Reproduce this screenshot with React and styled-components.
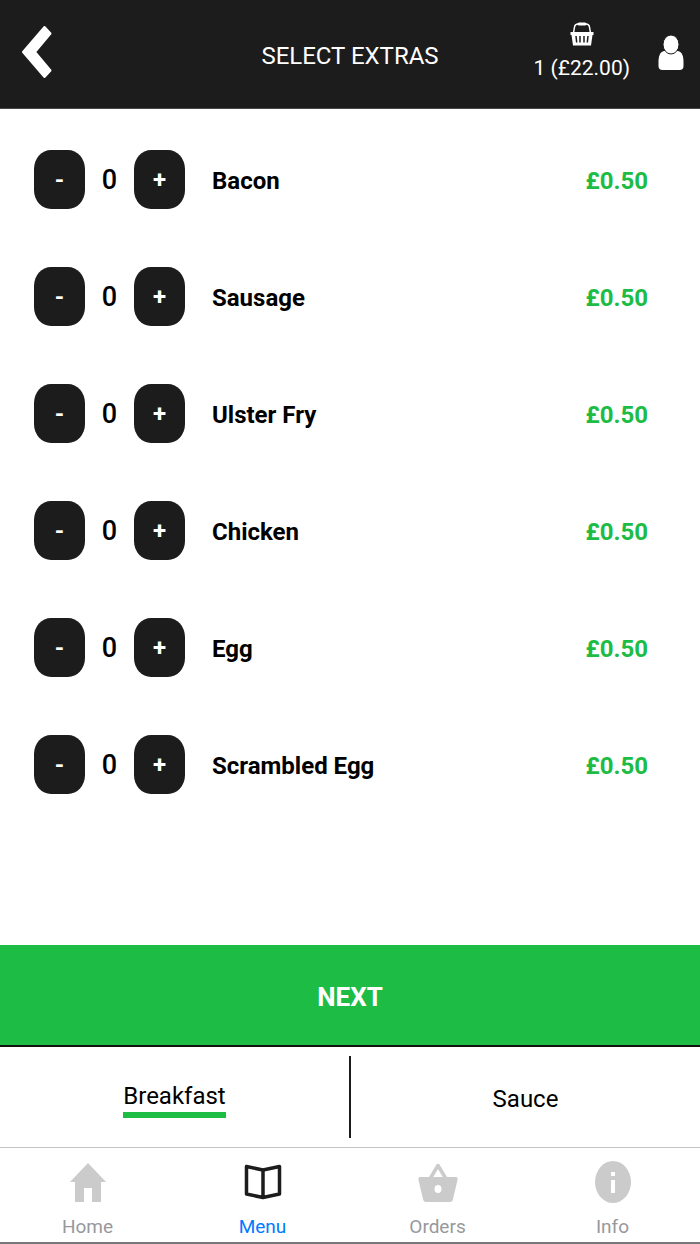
import { useState } from "react";
import styled, { createGlobalStyle } from "styled-components";

const GlobalStyle = createGlobalStyle`
  * {
    box-sizing: border-box;
  }

  body {
    margin: 0;
    background-color: #fff;
    color: #000;
    font-family: Roboto, "Liberation Sans", sans-serif;
  }

  button {
    border: none;
    padding: 0;
    background: none;
    font-family: inherit;
    cursor: pointer;
  }

  a {
    color: inherit;
    text-decoration: none;
  }

  svg {
    display: block;
  }
`;

const Page = styled.div`
  display: flex;
  flex-direction: column;
  min-height: 100vh;
`;

const Header = styled.header`
  display: grid;
  grid-template-columns: 1fr auto 1fr;
  align-items: center;
  height: 109px;
  padding: 0 16px 4px;
  border-bottom: 1px solid #4a4848;
  background-color: #1c1c1c;
  color: #fff;
`;

const BackButton = styled.button`
  justify-self: start;
  padding-left: 4px;
  color: #fff;
`;

const Title = styled.h1`
  margin: 0;
  padding-top: 8px;
  font-size: 24px;
  line-height: 32px;
  font-weight: 400;
`;

const HeaderActions = styled.div`
  display: flex;
  align-items: center;
  justify-content: flex-end;
  gap: 28px;
  padding-top: 2px;
`;

const BasketLink = styled.a`
  display: flex;
  flex-direction: column;
  align-items: center;
  gap: 6px;
  font-size: 21px;
  line-height: 32px;
`;

const ExtrasList = styled.ul`
  display: flex;
  flex-direction: column;
  flex: 1;
  gap: 58px;
  margin: 0;
  padding: 41px 52px 58px 34px;
  list-style: none;
`;

const ExtraRow = styled.li`
  display: flex;
  align-items: center;
`;

const StepButton = styled.button`
  width: 51px;
  height: 59px;
  border-radius: 17px / 19px;
  background-color: #1c1c1c;
  color: #fff;
  font-size: 24px;
  font-weight: 700;
`;

const Quantity = styled.output`
  width: 49px;
  font-size: 27px;
  font-weight: 500;
  text-align: center;
`;

const ExtraName = styled.span`
  flex: 1;
  padding: 2px 0 0 27px;
  font-size: 24px;
  line-height: 32px;
  font-weight: 700;
`;

const Price = styled.span`
  padding-top: 2px;
  color: #1cbc45;
  font-size: 24px;
  line-height: 32px;
  font-weight: 700;
`;

const NextButton = styled.button`
  height: 102px;
  padding-top: 4px;
  border-bottom: 2px solid #111;
  background-color: #1cbc45;
  color: #fff;
  font-size: 26px;
  font-weight: 700;
`;

const Tabs = styled.div`
  display: flex;
  height: 100px;
  padding: 9px 0;
`;

const Tab = styled.button`
  flex: 1;
  padding-top: 4px;
  color: #000;
  font-size: 24px;
  line-height: 32px;

  & + & {
    border-left: 2px solid #1c1c1c;
  }
`;

const TabLabel = styled.span`
  display: inline-block;
  border-bottom: ${(props) => (props.$active ? "6px solid #1cbc45" : "none")};
`;

const BottomNav = styled.nav`
  display: flex;
  height: 97px;
  border-top: 1px solid #c4c4c4;
  border-bottom: 2px solid #77777a;
`;

const NavItem = styled.a`
  display: flex;
  flex: 1;
  flex-direction: column;
  align-items: center;
  padding-top: 12px;
  gap: 11px;
  color: ${(props) => (props.$active ? "#007aff" : "#98989d")};
  font-size: 19px;
  line-height: 24px;
`;

const BackIcon = () => (
  <svg width="34" height="58" viewBox="0 0 34 58" aria-hidden="true">
    <path
      d="M24.5 4 30.5 10.5 15 29 30.5 47.5 24.5 54 3 29Z"
      fill="currentColor"
      stroke="currentColor"
      strokeWidth="2"
      strokeLinejoin="round"
    />
  </svg>
);

const ShoppingIcon = () => (
  <svg width="24" height="24" viewBox="0 0 24 24" aria-hidden="true">
    <path d="M3.500 11 4.500 5Q5 2 8 2H16Q19 2 19.500 5L20.500 11" fill="none" stroke="#fff" strokeWidth="1.500" />
    <path d="M9 2H15" stroke="#fff" strokeWidth="3" strokeLinecap="round" />
    <path d="M.5 10H23.500V13H22.500L21 23.500H3L1.500 13H.5Z" fill="#fff" />
    <path d="M6 14 6.700 20.500M10 14V20.500M14 14V20.500M18 14 17.300 20.500" stroke="#1c1c1c" strokeWidth="1.500" />
  </svg>
);

const UserIcon = () => (
  <svg width="26" height="36" viewBox="0 0 26 36" aria-hidden="true">
    <path
      d="M6 16C2 17 .5 21 .5 27V31Q.5 35 4.500 35H21.500Q25.500 35 25.500 31V27C25.500 21 24 17 20 16Z"
      fill="#fff"
    />
    <ellipse cx="13" cy="9.500" rx="8" ry="9.500" fill="#fff" stroke="#1c1c1c" strokeWidth="1" />
  </svg>
);

const HomeIcon = () => (
  <svg width="40" height="44" viewBox="0 0 40 44" aria-hidden="true">
    <path d="M20 3 38 22H33V42H24V28H16V42H7V22H2Z" fill="#cbcbcb" />
  </svg>
);

const MenuIcon = () => (
  <svg width="40" height="44" viewBox="0 0 40 44" aria-hidden="true">
    <path
      d="M20 10 3.500 6.500V34L20 37.500 36.500 34V6.500ZV37.500"
      fill="none"
      stroke="#1c1c1c"
      strokeWidth="3.500"
      strokeLinejoin="round"
    />
  </svg>
);

const OrdersIcon = () => (
  <svg width="40" height="44" viewBox="0 0 40 44" aria-hidden="true">
    <path d="M12.500 18 20 5.500 27.500 18" fill="none" stroke="#cbcbcb" strokeWidth="3.500" strokeLinejoin="round" />
    <path
      fillRule="evenodd"
      d="M2 17H38Q40 17 39.500 20L35 39Q34.500 42 32 42H8Q5.500 42 5 39L.5 20Q0 17 2 17ZM20 25A3.500 4 0 1 0 20 33A3.500 4 0 1 0 20 25Z"
      fill="#cbcbcb"
    />
  </svg>
);

const InfoIcon = () => (
  <svg width="40" height="44" viewBox="0 0 40 44" aria-hidden="true">
    <ellipse cx="20" cy="22" rx="18" ry="21" fill="#cbcbcb" />
    <path d="M18 12H22V16H18ZM18 20H22V33H18Z" fill="#fff" />
  </svg>
);

const extras = ["Bacon", "Sausage", "Ulster Fry", "Chicken", "Egg", "Scrambled Egg"];

const tabs = ["Breakfast", "Sauce"];

const navItems = [
  { label: "Home", icon: HomeIcon },
  { label: "Menu", icon: MenuIcon },
  { label: "Orders", icon: OrdersIcon },
  { label: "Info", icon: InfoIcon },
];

const App = () => {
  const [quantities, setQuantities] = useState({});
  const [activeTab, setActiveTab] = useState("Breakfast");

  const changeQuantity = (name, step) => {
    setQuantities((prev) => ({
      ...prev,
      [name]: Math.max(0, (prev[name] || 0) + step),
    }));
  };

  return (
    <>
      <GlobalStyle />
      <Page>
        <Header>
          <BackButton aria-label="Back">
            <BackIcon />
          </BackButton>
          <Title>SELECT EXTRAS</Title>
          <HeaderActions>
            <BasketLink href="#basket">
              <ShoppingIcon />
              1 (£22.00)
            </BasketLink>
            <a href="#account" aria-label="Account">
              <UserIcon />
            </a>
          </HeaderActions>
        </Header>

        <ExtrasList>
          {extras.map((name) => (
            <ExtraRow key={name}>
              <StepButton aria-label={`Remove ${name}`} onClick={() => changeQuantity(name, -1)}>
                -
              </StepButton>
              <Quantity>{quantities[name] || 0}</Quantity>
              <StepButton aria-label={`Add ${name}`} onClick={() => changeQuantity(name, 1)}>
                +
              </StepButton>
              <ExtraName>{name}</ExtraName>
              <Price>£0.50</Price>
            </ExtraRow>
          ))}
        </ExtrasList>

        <NextButton>NEXT</NextButton>

        <Tabs>
          {tabs.map((tab) => (
            <Tab key={tab} onClick={() => setActiveTab(tab)}>
              <TabLabel $active={tab === activeTab}>{tab}</TabLabel>
            </Tab>
          ))}
        </Tabs>

        <BottomNav>
          {navItems.map(({ label, icon: Icon }) => (
            <NavItem key={label} href={`#${label.toLowerCase()}`} $active={label === "Menu"}>
              <Icon />
              {label}
            </NavItem>
          ))}
        </BottomNav>
      </Page>
    </>
  );
};

export default App;
